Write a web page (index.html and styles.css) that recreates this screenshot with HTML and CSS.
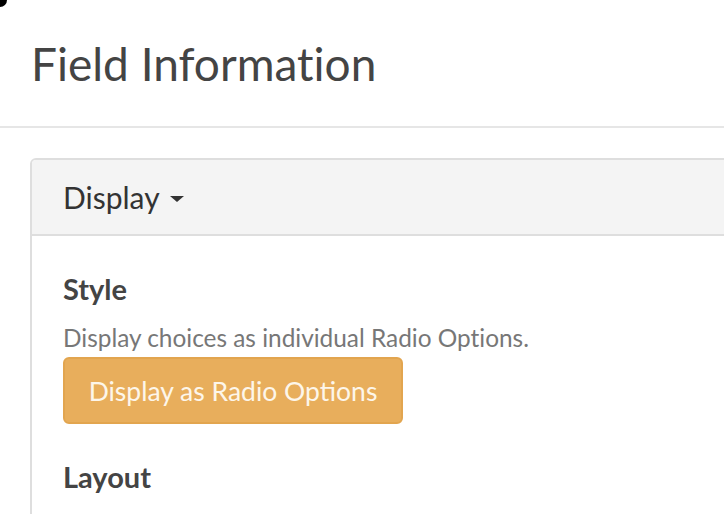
FILE: index.html
```html
<!DOCTYPE html>
<html>
<head>
<meta charset="utf-8">
<link rel="stylesheet" href="styles.css">
</head>
<body>
<div class="corner"></div>
<header class="page-header">
  <h1 class="title">Field Information</h1>
</header>
<section class="panel">
  <div class="panel-heading">
    <span class="panel-title">Display</span>
    <span class="caret"></span>
  </div>
  <div class="panel-body">
    <h3 class="label">Style</h3>
    <p class="help">Display choices as individual Radio Options.</p>
    <button class="btn-warning">Display as Radio Options</button>
    <h3 class="label label-layout">Layout</h3>
  </div>
</section>
</body>
</html>
```
FILE: styles.css
```css
html, body {
  margin: 0;
  padding: 0;
  background: #fff;
  overflow: hidden;
  width: 724px;
  height: 514px;
}
body {
  font-family: "Lato", "Open Sans", sans-serif;
  font-variant-ligatures: none;
  color: #333;
  position: relative;
}
.corner {
  position: absolute;
  left: 0;
  top: 0;
  width: 7px;
  height: 7px;
  background: #000;
  border-bottom-right-radius: 7px;
}
.page-header {
  height: 126px;
  border-bottom: 2px solid #e6e6e6;
  padding-left: 31px;
  display: flex;
  align-items: center;
}
.title {
  margin: 0;
  font-weight: 400;
  font-size: 46px;
  color: #444;
}
.panel {
  margin: 30px 0 0 30px;
  width: 900px;
  border: 2px solid #dedede;
  border-radius: 6px;
  overflow: hidden;
}
.panel-heading {
  height: 74px;
  background: #f4f4f4;
  border-bottom: 2px solid #dedede;
  padding-left: 31px;
  display: flex;
  align-items: center;
  gap: 10px;
}
.panel-title {
  font-size: 30px;
  color: #333;
}
.caret {
  width: 0;
  height: 0;
  border-left: 7px solid transparent;
  border-right: 7px solid transparent;
  border-top: 6px solid #333;
  margin-top: 4px;
}
.panel-body {
  padding: 35px 31px 80px;
}
.label {
  margin: 0;
  font-size: 29px;
  font-weight: 700;
  color: #444;
}
.help {
  margin: 17px 0 0;
  font-size: 24.4px;
  color: #777;
}
.btn-warning {
  display: block;
  margin-top: 5px;
  width: 340px;
  height: 67px;
  background: #e8ae5c;
  border: 2px solid #e2a54f;
  border-radius: 6px;
  color: #fdf6ea;
  font-family: inherit;
  font-size: 26.5px;
  padding: 0;
}
.label-layout {
  margin-top: 35px;
}
```
